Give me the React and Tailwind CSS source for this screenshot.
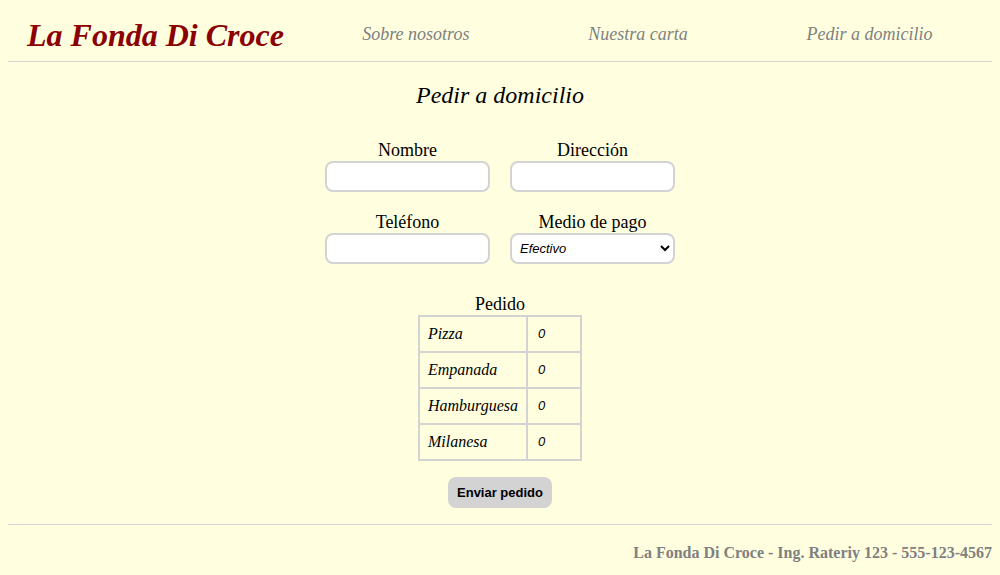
import { useState } from "react";

const serif = "font-['Liberation_Serif','Times_New_Roman',serif]";
const sans = "font-['Liberation_Sans',Arial,sans-serif]";

const items = ["Pizza", "Empanada", "Hamburguesa", "Milanesa"];

function Campo({ label, children }) {
  return (
    <div className="flex flex-col items-center">
      <label className="text-[18px] leading-[21px] text-black">{label}</label>
      {children}
    </div>
  );
}

export default function App() {
  const [form, setForm] = useState({ nombre: "", direccion: "", telefono: "", pago: "efectivo" });

  const handleChange = (e) => {
    setForm({ ...form, [e.target.name]: e.target.value });
  };

  const inputClass =
    "w-[165px] h-[31px] bg-white border-2 border-[#d3d3d3] rounded-lg px-1 outline-none";

  return (
    <div className={`min-h-screen bg-[#ffffe0] ${serif} p-2`}>
      {/* Cabecera */}
      <header className="flex items-center h-[54px] border-b border-[#d3d3d3]">
        <h1 className="px-[19px] text-[32px] font-bold italic text-[#8b0000] leading-none">
          La Fonda Di Croce
        </h1>
        <nav className="flex-1 flex justify-around text-[18px] italic text-[#808080]">
          <a href="#">Sobre nosotros</a>
          <a href="#">Nuestra carta</a>
          <a href="#">Pedir a domicilio</a>
        </nav>
      </header>

      {/* Formulario */}
      <main className="flex flex-col items-center pt-[19px] pb-4 border-b border-[#d3d3d3]">
        <h2 className="text-[24px] italic leading-[28px] mb-[31px]">Pedir a domicilio</h2>

        <div className="grid grid-cols-2 gap-x-5 gap-y-5">
          <Campo label="Nombre">
            <input name="nombre" value={form.nombre} onChange={handleChange} className={inputClass} />
          </Campo>
          <Campo label="Dirección">
            <input name="direccion" value={form.direccion} onChange={handleChange} className={inputClass} />
          </Campo>
          <Campo label="Teléfono">
            <input name="telefono" value={form.telefono} onChange={handleChange} className={inputClass} />
          </Campo>
          <Campo label="Medio de pago">
            <select
              name="pago"
              value={form.pago}
              onChange={handleChange}
              className={`${inputClass} ${sans} text-[13px] italic`}
            >
              <option value="efectivo">Efectivo</option>
              <option value="tarjeta">Tarjeta</option>
            </select>
          </Campo>
        </div>

        <p className="text-[18px] leading-[21px] mt-[30px]">Pedido</p>
        <table className="border-collapse border-2 border-[#d3d3d3]">
          <tbody>
            {items.map((item) => (
              <tr key={item} className="h-[36px]">
                <td className="border-2 border-[#d3d3d3] w-[108px] pl-2 italic text-[16px]">{item}</td>
                <td className={`border-2 border-[#d3d3d3] w-[54px] pl-[10px] italic text-[13px] ${sans}`}>0</td>
              </tr>
            ))}
          </tbody>
        </table>

        <button className={`mt-4 h-[31px] px-[9px] bg-[#d3d3d3] rounded-lg ${sans} text-[13px] font-bold text-black`}>
          Enviar pedido
        </button>
      </main>

      {/* Pie */}
      <footer className="text-right text-[16px] font-bold text-[#808080] pt-[16px]">
        La Fonda Di Croce - Ing. Rateriy 123 - 555-123-4567
      </footer>
    </div>
  );
}
